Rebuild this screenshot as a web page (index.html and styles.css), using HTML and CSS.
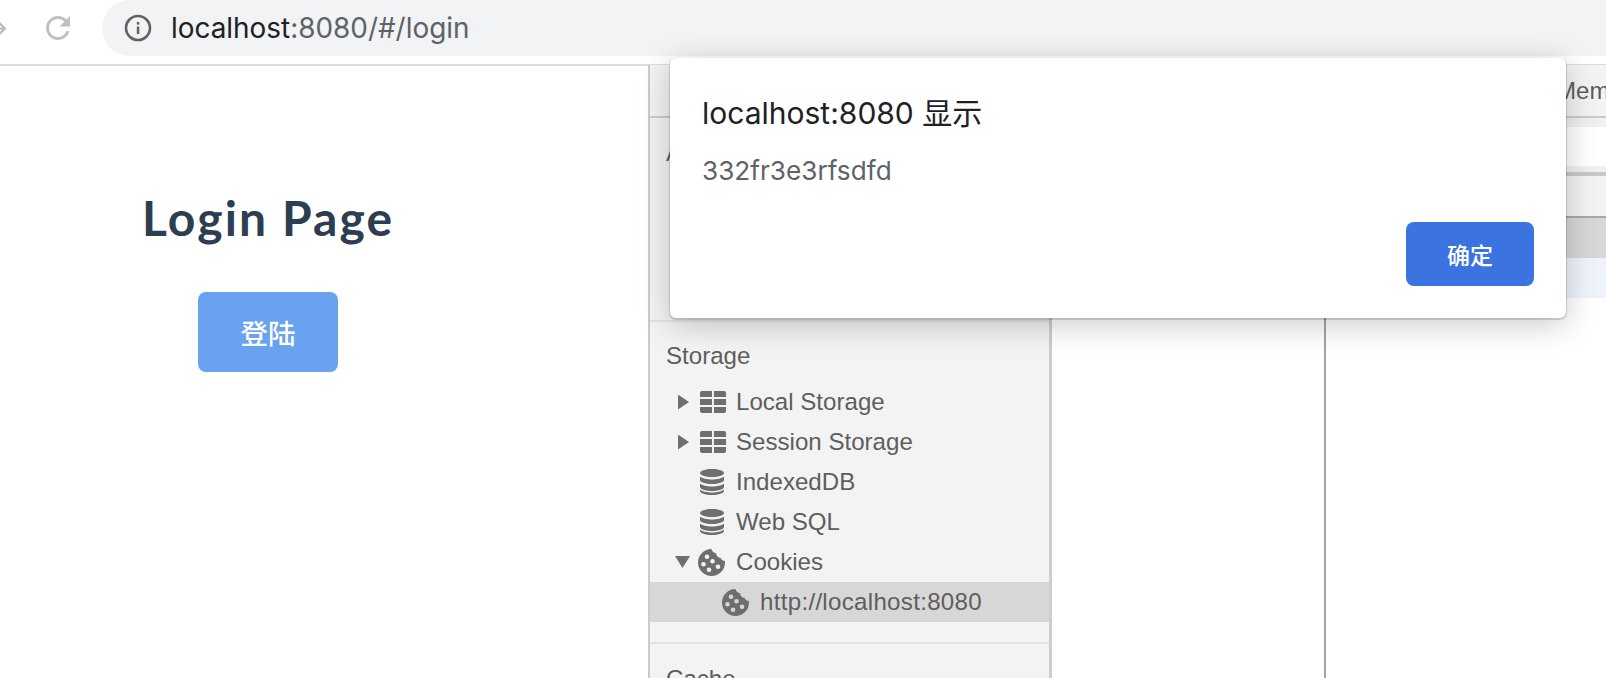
FILE: index.html
```html
<!DOCTYPE html>
<html lang="zh">
<head>
<meta charset="utf-8">
<title>Login Page</title>
<link rel="stylesheet" href="styles.css">
</head>
<body>
<svg class="defs" width="0" height="0" aria-hidden="true">
  <defs>
    <symbol id="i-table" viewBox="0 0 26 22">
      <path d="M2 0h10v6H0V2a2 2 0 0 1 2-2zM14 0h10a2 2 0 0 1 2 2v4H14zM0 8h12v6H0zM14 8h12v6H14zM0 16h12v6H2a2 2 0 0 1-2-2zM14 16h12v4a2 2 0 0 1-2 2H14z"/>
    </symbol>
    <symbol id="i-db" viewBox="0 0 24 26">
      <path d="M12 0c6.600 0 12 1.800 12 4s-5.400 4-12 4S0 6.200 0 4s5.400-4 12-4z"/>
      <path d="M0 7.500c2 2 7 3 12 3s10-1 12-3V11c0 2.200-5.400 4-12 4S0 13.200 0 11z"/>
      <path d="M0 14.500c2 2 7 3 12 3s10-1 12-3V18c0 2.200-5.400 4-12 4S0 20.200 0 18z"/>
      <path d="M0 20.500c2 2 7 3 12 3s10-1 12-3V22c0 2.200-5.400 4-12 4S0 24.200 0 22z"/>
    </symbol>
    <symbol id="i-cookie" viewBox="0 0 27 27">
      <path fill-rule="evenodd" d="M13.500 0c.6 2.600 2.400 4 4.600 4.200.2 2.800 2 4.600 4.600 4.800.3 1.600 2 2.800 4.300 2.900.2.500 0 1 0 1.600A13.500 13.500 0 1 1 13.500 0zM9 5.500a2.300 2.300 0 1 0 0 4.600 2.300 2.300 0 0 0 0-4.600zM14.500 10a2.300 2.300 0 1 0 0 4.600 2.300 2.300 0 0 0 0-4.600zM5.500 13a2.300 2.300 0 1 0 0 4.600 2.300 2.300 0 0 0 0-4.600zM20 15.500a2.300 2.300 0 1 0 0 4.600 2.300 2.300 0 0 0 0-4.600zM11 18.500a2.300 2.300 0 1 0 0 4.600 2.300 2.300 0 0 0 0-4.600z"/>
    </symbol>
  </defs>
</svg>

<header class="toolbar">
  <div class="nav">
    <svg class="forward" viewBox="0 0 24 24" width="27" height="27"><path d="M12 4l-1.400 1.400L16.200 11H4v2h12.200l-5.600 5.600L12 20l8-8z"/></svg>
    <svg class="reload" viewBox="0 0 24 24" width="36" height="36"><path d="M17.650 6.350A7.960 7.960 0 0 0 12 4a8 8 0 1 0 7.730 10h-2.080A6 6 0 1 1 12 6c1.660 0 3.140.69 4.220 1.780L13 11h7V4z"/></svg>
  </div>
  <div class="omnibox">
    <svg class="info" viewBox="0 0 28 28" width="28" height="28">
      <circle cx="14" cy="14" r="12" fill="none" stroke="#5f6368" stroke-width="2.600"/>
      <rect x="12.800" y="12.500" width="2.500" height="7.500" fill="#5f6368"/>
      <rect x="12.800" y="8" width="2.500" height="2.600" fill="#5f6368"/>
    </svg>
    <span class="url"><span class="host">localhost</span>:8080/#/login</span>
  </div>
</header>

<div class="content">
  <main class="page">
    <h1 class="page-title">Login Page</h1>
    <button class="login-btn" type="button">登陆</button>
  </main>

  <section class="devtools">
    <div class="tabs"><span class="tab">Memory</span></div>
    <div class="panes">
      <aside class="sidebar">
        <div class="section section-app">
          <div class="heading">Application</div>
        </div>
        <div class="section section-storage">
          <div class="heading">Storage</div>
          <div class="row"><span class="twisty right"></span><svg class="icon table"><use href="#i-table"/></svg>Local Storage</div>
          <div class="row"><span class="twisty right"></span><svg class="icon table"><use href="#i-table"/></svg>Session Storage</div>
          <div class="row"><span class="twisty"></span><svg class="icon db"><use href="#i-db"/></svg>IndexedDB</div>
          <div class="row"><span class="twisty"></span><svg class="icon db"><use href="#i-db"/></svg>Web SQL</div>
          <div class="row"><span class="twisty down"></span><svg class="icon cookie"><use href="#i-cookie"/></svg>Cookies</div>
          <div class="row child selected"><svg class="icon cookie"><use href="#i-cookie"/></svg>http://localhost:8080</div>
        </div>
        <div class="section">
          <div class="heading">Cache</div>
        </div>
      </aside>
      <div class="middle"></div>
      <div class="detail">
        <div class="filter"><div class="filter-input"></div></div>
        <div class="thead"></div>
        <div class="tr-selected"></div>
        <div class="tr-alt"></div>
      </div>
    </div>
  </section>
</div>

<div class="dialog" role="alertdialog">
  <div class="dialog-title">localhost:8080 显示</div>
  <div class="dialog-msg">332fr3e3rfsdfd</div>
  <div class="dialog-actions"><button class="ok-btn" type="button">确定</button></div>
</div>
</body>
</html>
```

FILE: styles.css
```css
* { box-sizing: border-box; }
html, body { margin: 0; height: 678px; overflow: hidden; background: #fff; }
body {
  position: relative;
  font-family: "Liberation Sans", "Noto Sans CJK SC", sans-serif;
  display: flex;
  flex-direction: column;
}
.defs { position: absolute; }

.toolbar {
  height: 66px;
  flex: none;
  display: flex;
  align-items: flex-start;
  border-bottom: 2px solid #dadce0;
}
.nav { width: 102px; height: 56px; flex: none; display: flex; align-items: center; }
.forward { fill: #bdbdbd; margin-left: -16px; flex: none; }
.reload { fill: #c0c0c0; margin-left: 29px; flex: none; }
.omnibox {
  flex: 1;
  height: 56px;
  background: #f1f3f4;
  border-radius: 28px 0 0 28px;
  display: flex;
  align-items: center;
  padding-left: 22px;
}
.info { flex: none; }
.url {
  margin-left: 19px;
  font: 27.900px "Inter", "Liberation Sans", sans-serif;
  color: #5f6368;
}
.host { color: #202124; }

.content { flex: 1; display: flex; min-height: 0; }
.page {
  width: 648px;
  flex: none;
  padding-left: 142px;
}
.page-title {
  margin: 0;
  padding-top: 120px;
  font: 700 48px/64px "Lato", sans-serif;
  color: #2c3e50;
  letter-spacing: 2.100px;
}
.login-btn {
  display: block;
  margin: 42px 0 0 56px;
  width: 140px;
  height: 80px;
  border: 0;
  border-radius: 8px;
  background: #68a2f0;
  color: #fff;
  font: 500 27.500px "Noto Sans CJK SC", sans-serif;
}

.devtools {
  flex: 1;
  display: flex;
  flex-direction: column;
  min-width: 0;
  border-left: 2px solid #cbcbcb;
  margin-top: -1px;
  color: #5e5e5e;
  font-size: 24.100px;
}
.tabs {
  height: 53px;
  flex: none;
  background: #f3f3f3;
  border-bottom: 2px solid #cccccc;
  display: flex;
  align-items: center;
  padding-left: 906px;
  overflow: hidden;
}
.tab { white-space: nowrap; }
.panes { flex: 1; display: flex; min-height: 0; }
.sidebar {
  width: 402px;
  flex: none;
  background: #f3f3f3;
  border-right: 3px solid #cdcdcd;
}
.section { border-bottom: 2px solid #e2e2e2; padding: 15px 0 20px; }
.section-app { height: 204px; }
.section-storage { padding-top: 14px; }
.heading { height: 40px; line-height: 40px; padding-left: 16px; margin-bottom: 6px; }
.row { height: 40px; display: flex; align-items: center; padding-left: 25px; white-space: nowrap; }
.twisty { width: 15px; flex: none; height: 14px; margin-right: 10px; }
.twisty.right { background: #6e6e6e; width: 11px; margin: 0 11px 0 3px; height: 15px; clip-path: polygon(0 0, 100% 50%, 0 100%); }
.twisty.down { background: #6e6e6e; height: 12px; margin-right: 8px; clip-path: polygon(0 0, 100% 0, 50% 100%); }
.icon { fill: #6e6e6e; flex: none; margin-right: 10px; }
.table { width: 26px; height: 22px; }
.db { width: 24px; height: 26px; margin-right: 12px; }
.cookie { width: 27px; height: 27px; margin-right: 11px; }
.row.child { padding-left: 72px; letter-spacing: .3px; }
.selected { background: #d7d7d7; }

.middle { width: 274px; flex: none; background: #fff; border-right: 2px solid #a3a3a3; }
.detail { flex: 1; background: #fff; }
.filter { height: 58px; background: #f0f0f0; border-bottom: 4px solid #c8c8c8; border-top: 9px solid #f0f0f0; }
.filter-input { height: 39px; background: #fff; }
.thead { height: 42px; background: #f3f3f3; border-bottom: 2px solid #a8a8a8; }
.tr-selected { height: 40px; background: #d7d7d7; }
.tr-alt { height: 40px; background: #eef3fc; }

.dialog {
  position: absolute;
  left: 670px;
  top: 58px;
  width: 896px;
  height: 260px;
  background: #fff;
  border-radius: 6px;
  box-shadow: 0 1px 0 1px rgba(0,0,0,.14), 0 6px 32px rgba(0,0,0,.22);
  padding: 0 32px;
  font-family: "Inter", "Noto Sans CJK SC", sans-serif;
}
.dialog-title { margin-top: 37px; font-size: 30px; line-height: 36px; color: #202124; }
.dialog-msg { margin-top: 25px; font-size: 26.200px; line-height: 30px; color: #5f6368; }
.dialog-actions { display: flex; justify-content: flex-end; margin-top: 36px; }
.ok-btn {
  width: 128px;
  height: 64px;
  border: 0;
  border-radius: 8px;
  background: #3b73e1;
  color: #fff;
  font: 500 23px "Noto Sans CJK SC", sans-serif;
}
```
